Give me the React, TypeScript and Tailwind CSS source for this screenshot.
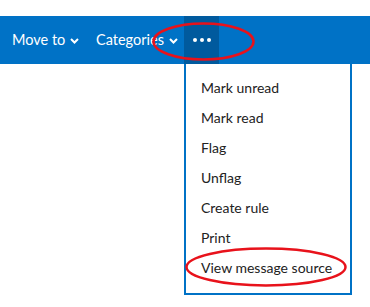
const menuItems = ['Mark unread', 'Mark read', 'Flag', 'Unflag', 'Create rule', 'Print', 'View message source']

function Chevron() {
  return (
    <svg width="9" height="6" viewBox="0 0 9 6" className="ml-[5px] mt-[2px] shrink-0">
      <path d="M1 1 L4.5 4.5 L8 1" stroke="white" strokeWidth="2" fill="none" />
    </svg>
  )
}

export default function App() {
  return (
    <div className="relative w-[370px] h-[307px] bg-white overflow-hidden" style={{ fontFamily: 'Lato, sans-serif' }}>
      <div className="h-4" />
      <div className="flex items-stretch h-12 bg-[#0072c6] text-white text-[14.5px] whitespace-nowrap">
        <button className="flex items-center w-[84px] shrink-0 pl-3">
          Move to
          <Chevron />
        </button>
        <button className="flex items-center w-[100px] shrink-0 pl-3">
          Categories
          <Chevron />
        </button>
        <div className="relative">
          <button className="flex items-center justify-center w-[35px] h-12 bg-[#005a9e] gap-[3px]">
            <span className="w-[4px] h-[4px] rounded-full bg-white" />
            <span className="w-[4px] h-[4px] rounded-full bg-white" />
            <span className="w-[4px] h-[4px] rounded-full bg-white" />
          </button>
          <div className="absolute left-0 top-12 w-[168px] h-[231px] border-2 border-t-0 border-[#0072c6] bg-white pt-2 text-[14px] text-[#222]">
            {menuItems.map((item) => (
              <div key={item} className="h-[30px] flex items-center pl-[15px]">
                {item}
              </div>
            ))}
          </div>
        </div>
      </div>
      <svg className="absolute inset-0 pointer-events-none" width="370" height="307">
        <ellipse cx="203.5" cy="41.5" rx="50" ry="18" stroke="#e8121b" strokeWidth="2.5" fill="none" />
        <ellipse cx="266" cy="267" rx="79.5" ry="18.5" stroke="#e8121b" strokeWidth="2.5" fill="none" />
      </svg>
    </div>
  )
}
